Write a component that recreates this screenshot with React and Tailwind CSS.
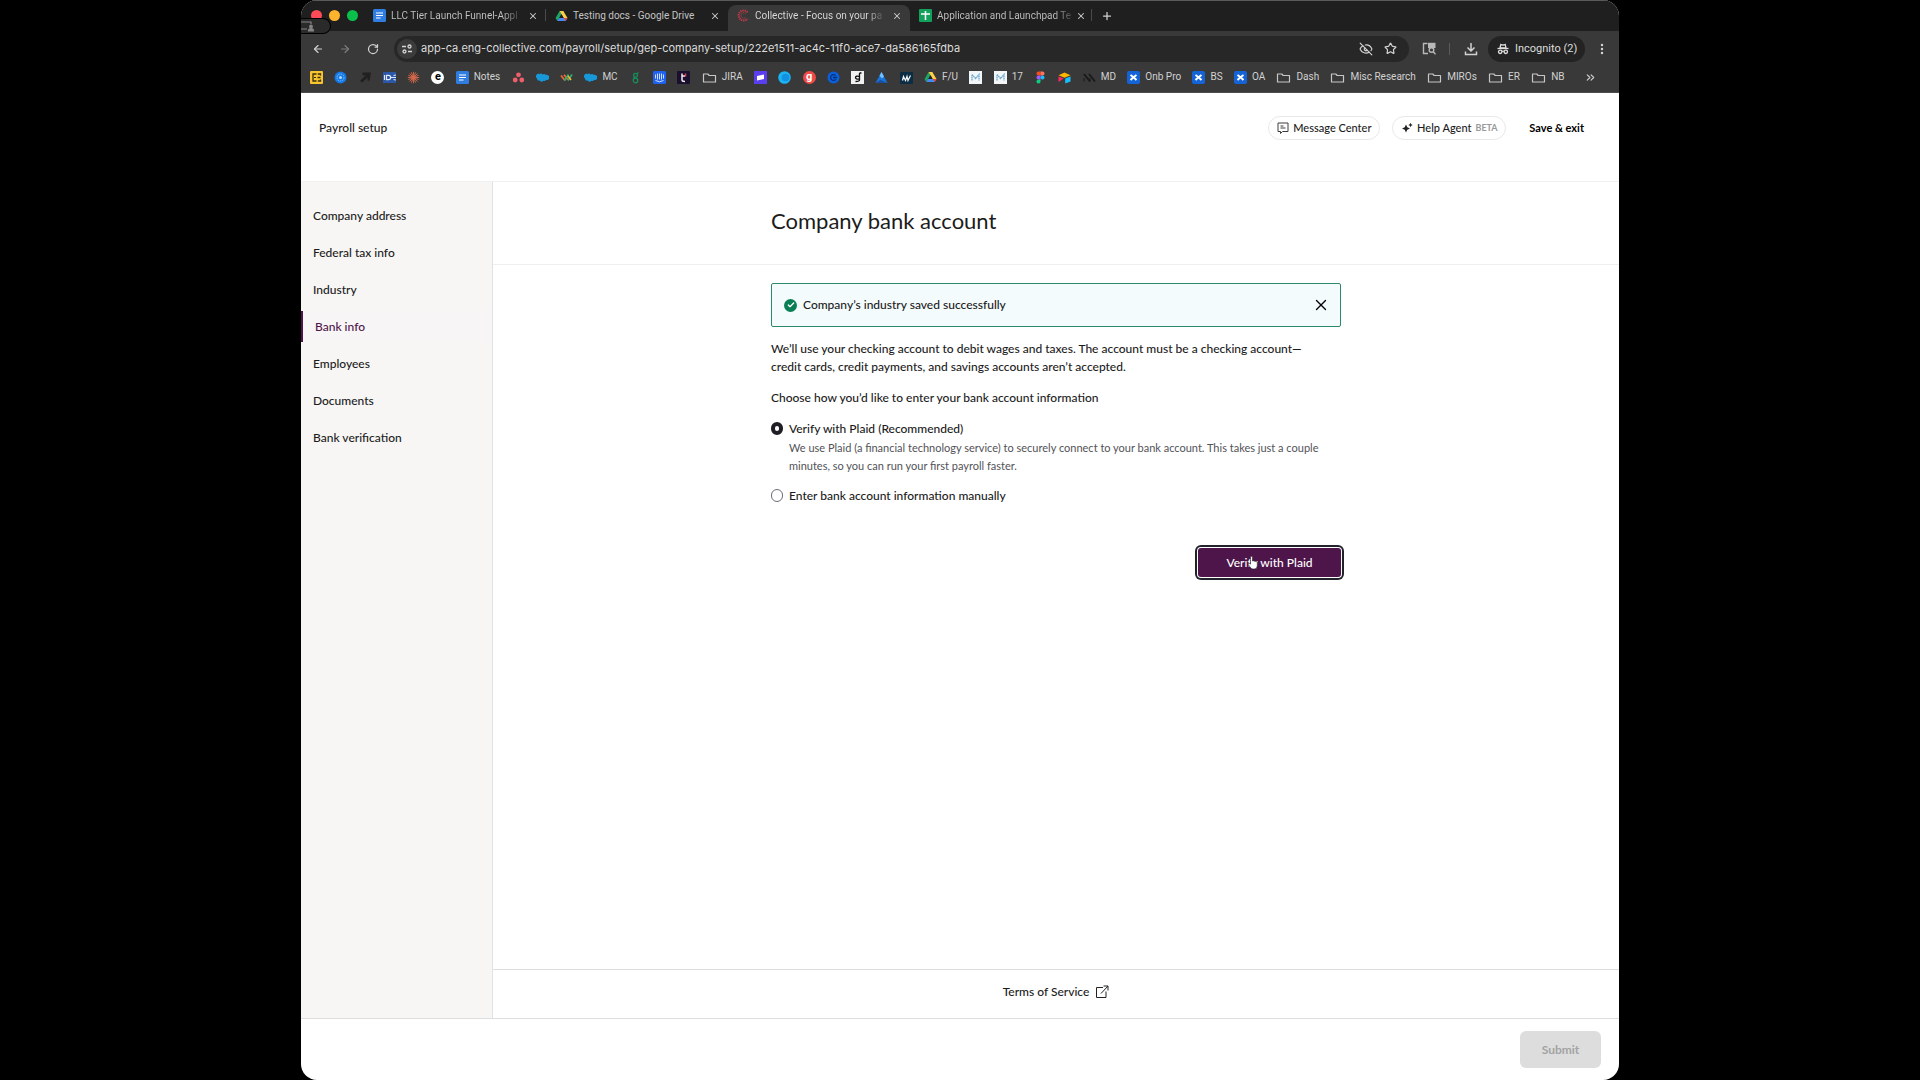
import { useState } from "react";
import { ArrowLeft, ArrowRight, RotateCw, EyeOff, Star, X, Plus, EllipsisVertical, ChevronsRight, Check } from "lucide-react";

const steps = [
  "Company address",
  "Federal tax info",
  "Industry",
  "Bank info",
  "Employees",
  "Documents",
  "Bank verification",
];

function DocsIcon() {
  return (
    <svg viewBox="0 0 13 13" className="w-[13px] h-[13px] shrink-0">
      <rect width="13" height="13" rx="1.500" fill="#2f7de1" />
      <path d="M3 4h7M3 6.500h7M3 9h4.500" stroke="#fff" strokeWidth="1.200" />
    </svg>
  );
}

function DriveIcon() {
  return (
    <svg viewBox="0 0 14 13" className="w-[13px] h-[12px] shrink-0">
      <path d="M5 1h4L4.700 8.500 2.500 12 .5 8.800z" fill="#1ea362" />
      <path d="M5 1h4l4.500 7.800H9.300z" fill="#ffcf48" />
      <path d="M4.500 8.700h9L11.500 12h-9z" fill="#4688f4" />
      <path d="M9.600 8.700h3.900L11.500 12z" fill="#ea4335" />
      <path d="M7 4.600l2.300 4.100H4.700z" fill="#1f1f1f" />
    </svg>
  );
}

function SheetsIcon() {
  return (
    <svg viewBox="0 0 13 13" className="w-[13px] h-[13px] shrink-0">
      <rect width="13" height="13" rx="1" fill="#12a15b" />
      <path d="M2 5h9M6.500 2v9" stroke="#fff" strokeWidth="1.500" />
    </svg>
  );
}

function CollectiveIcon() {
  return (
    <svg viewBox="0 0 13 13" className="w-[13px] h-[13px] shrink-0" fill="none" stroke="#c4394b">
      <path d="M10.500 3.200a5 5 0 1 0 0 6.600" strokeWidth="2.200" strokeDasharray="1.200 0.900" />
      <path d="M8.800 5a2.600 2.600 0 1 0 0 3" strokeWidth="1" strokeDasharray="1 0.800" />
    </svg>
  );
}

function FolderIcon() {
  return (
    <svg viewBox="0 0 15 13" className="w-[15px] h-[13px] shrink-0" fill="none" stroke="#c7c7c7" strokeWidth="1.200">
      <path d="M1.500 11V3h4.300l1.400 1.500h6.300V11z" strokeLinejoin="round" />
    </svg>
  );
}

function CloudIcon() {
  return (
    <svg viewBox="0 0 13 13" className="w-[13px] h-[13px] shrink-0" fill="#1798d8">
      <path d="M3.200 3a2.600 2.600 0 0 1 3.500.4 2.400 2.400 0 0 1 3.200.6 2.600 2.600 0 1 1 .2 5 2.200 2.200 0 0 1-2.600.8 2.300 2.300 0 0 1-3.800-.2A2.400 2.400 0 0 1 1 7.400 2.500 2.500 0 0 1 3.200 3z" />
    </svg>
  );
}

function JiraXIcon() {
  return (
    <svg viewBox="0 0 13 13" className="w-[13px] h-[13px] shrink-0">
      <rect width="13" height="13" rx="2" fill="#1464d8" />
      <path d="M3.500 4Q6.500 6 9.500 9M9.500 4Q6.500 6 3.500 9" stroke="#fff" strokeWidth="2" fill="none" />
    </svg>
  );
}

function MiroMIcon() {
  return (
    <svg viewBox="0 0 13 13" className="w-[13px] h-[13px] shrink-0">
      <rect width="13" height="13" fill="#f2f6f9" />
      <path d="M3 9.500v-6l3.500 4 3.500-4v6" stroke="#6aa6cc" strokeWidth="1.300" fill="none" strokeDasharray="1.500 0.500" />
    </svg>
  );
}

function LetterIcon({ className, children }) {
  return (
    <span className={`w-[13px] h-[13px] shrink-0 flex items-center justify-center text-[11px] leading-none ${className}`}>
      {children}
    </span>
  );
}

function Glyph({ children }) {
  return (
    <svg viewBox="0 0 13 13" className="w-[13px] h-[13px] shrink-0" fill="none">
      {children}
    </svg>
  );
}

const bookmarks = [
  {
    icon: (
      <Glyph>
        <rect width="13" height="13" rx="1" fill="#f7c52f" />
        <path d="M6.500 3H3v7h3.500M7.800 3h2.700v1.500M10.500 8.500V10H7.800M7.500 6.500h3" stroke="#3a2d0c" strokeWidth="1.300" />
        <path d="M4 6.500h2" stroke="#3a2d0c" />
      </Glyph>
    ),
  },
  {
    icon: (
      <Glyph>
        <circle cx="6.500" cy="6.500" r="6" fill="#1478e8" />
        <circle cx="6.500" cy="6.500" r="3.500" stroke="#7cc4ff" strokeDasharray="1.500 0.800" />
        <circle cx="6.500" cy="6.500" r="1.500" fill="#a8d8ff" />
      </Glyph>
    ),
  },
  {
    icon: (
      <Glyph>
        <path d="M3.500 1.500H12l-1.500 8.300-2.200-.4.600-3L3 11.500 1 9.800l5.800-5.500h-3.300z" fill="#202020" />
      </Glyph>
    ),
  },
  {
    icon: (
      <Glyph>
        <rect y="1" width="13" height="11" fill="#2b57a8" />
        <path d="M1.500 4v5M3.500 4.300h2a2.200 2.200 0 0 1 0 4.400h-2zM8 6.500h5M10.500 4.500l2.500-.5M10.500 8.500l2.500.5" stroke="#dfe8f7" strokeWidth="1.200" />
      </Glyph>
    ),
  },
  {
    icon: (
      <Glyph>
        <path
          d="M6.500 .8v11.400M.8 6.500h11.400M2.500 2.500l8 8M10.500 2.500l-8 8M4.300 1.300l4.400 10.400M8.700 1.300l-4.400 10.400M1.300 4.300l10.400 4.400M11.700 4.300l-10.400 4.400"
          stroke="#d9694b"
          strokeWidth="0.900"
        />
      </Glyph>
    ),
  },
  { icon: <LetterIcon className="rounded-full bg-white text-black font-bold pb-px">e</LetterIcon> },
  { icon: <DocsIcon />, label: "Notes" },
  {
    icon: (
      <Glyph>
        <circle cx="6.500" cy="3.800" r="2.400" fill="#ee5f6b" />
        <circle cx="3.200" cy="9" r="2.400" fill="#ee5f6b" />
        <circle cx="9.800" cy="9" r="2.400" fill="#ee5f6b" />
      </Glyph>
    ),
  },
  { icon: <CloudIcon /> },
  {
    icon: (
      <Glyph>
        <path d="M1 4.500l4 5M4 3.800l4 5" stroke="#ef6a3a" strokeWidth="1.700" />
        <path d="M8.500 3.500l-4 6M12 3.500l-4 6" stroke="#2fae72" strokeWidth="1.700" />
        <path d="M8 5l3 4" stroke="#f2b632" strokeWidth="1.500" />
      </Glyph>
    ),
  },
  { icon: <CloudIcon />, label: "MC" },
  {
    icon: (
      <Glyph>
        <circle cx="6.500" cy="4.300" r="1.900" stroke="#14935c" strokeWidth="1.200" />
        <circle cx="6.500" cy="9.500" r="2.300" stroke="#14935c" strokeWidth="1.200" />
        <path d="M8 3L9.500 1M5.500 6l-1.200 1.500" stroke="#14935c" />
      </Glyph>
    ),
  },
  {
    icon: (
      <Glyph>
        <rect width="13" height="13" rx="1.500" fill="#1f62f0" />
        <path d="M2.500 3.500v4M4.500 2.500v6M6.500 2.500v6M8.500 2.500v6M10.500 3.500v4M2.500 9.500q4 2.500 8 0" stroke="#e4edff" strokeWidth="0.900" />
      </Glyph>
    ),
  },
  {
    icon: (
      <Glyph>
        <rect width="13" height="13" rx="1" fill="#1a0f2e" />
        <path d="M5 2.500v6.500q0 1.500 3 1.500M5 5h3" stroke="#f5e9ef" strokeWidth="1.500" />
        <path d="M8.500 2.500v3" stroke="#e44a4a" strokeWidth="1.500" />
      </Glyph>
    ),
  },
  { icon: <FolderIcon />, label: "JIRA" },
  {
    icon: (
      <Glyph>
        <rect width="13" height="13" fill="#5a3ff0" />
        <path d="M3 5l7-1.500v4.500l-7 1.500z" fill="#fff" />
      </Glyph>
    ),
  },
  {
    icon: (
      <Glyph>
        <circle cx="6.500" cy="6.500" r="6.300" fill="#1ab4f4" />
        <circle cx="7.500" cy="6.500" r="3.800" fill="#1490e0" />
      </Glyph>
    ),
  },
  { icon: <LetterIcon className="rounded-full bg-[#ee4a47] text-white font-bold pb-[2px]">g</LetterIcon> },
  {
    icon: (
      <Glyph>
        <circle cx="6.500" cy="6.500" r="6" fill="#0b5fd8" />
        <path d="M8.800 4.700a2.900 2.900 0 1 0 0 3.600M6 6.500h4" stroke="#0a2f7a" strokeWidth="1.300" />
      </Glyph>
    ),
  },
  {
    icon: (
      <Glyph>
        <rect width="13" height="13" fill="#f1f1f1" />
        <path d="M8.500 2v7q0 1.500-4 1.500M8.500 5.500q-4-1-4 1t4 1.500M8.500 2h2" stroke="#111" strokeWidth="1.300" />
      </Glyph>
    ),
  },
  {
    icon: (
      <Glyph>
        <path d="M6.500 1l6 11H.5z" fill="#1a73d8" />
        <path d="M6.500 1l2.500 4.600-2 2-2.500-2.900z" fill="#6fc2ff" />
        <path d="M.5 12l5-3 7 3z" fill="#1b4f9c" />
      </Glyph>
    ),
  },
  {
    icon: (
      <Glyph>
        <rect y="1" width="13" height="12" rx="1" fill="#0c2c44" />
        <path d="M2.500 9.500l1-4 2 4 1.500-4 1 4 2.500-5" stroke="#eef4f8" strokeWidth="1.300" />
      </Glyph>
    ),
  },
  { icon: <DriveIcon />, label: "F/U" },
  { icon: <MiroMIcon /> },
  { icon: <MiroMIcon />, label: "17" },
  {
    icon: (
      <Glyph>
        <path d="M6.500.5h-2a2 2 0 0 0 0 4h2z" fill="#f24e1e" />
        <path d="M6.500.5h2a2 2 0 0 1 0 4h-2z" fill="#ff7262" />
        <path d="M6.500 4.500h-2a2 2 0 0 0 0 4h2z" fill="#a259ff" />
        <circle cx="8.500" cy="6.500" r="2" fill="#1abcfe" />
        <path d="M6.500 8.500h-2a2 2 0 1 0 2 2z" fill="#0acf83" />
      </Glyph>
    ),
  },
  {
    icon: (
      <Glyph>
        <path d="M.5 4.200L6.500 1.500l6 2.700-6 2.500z" fill="#fcb400" />
        <path d="M7.200 7.600l5.300-2v5l-5.300 2z" fill="#18bfff" />
        <path d="M.5 5.400l5.200 2.200-5.200 3.500z" fill="#f82b60" />
      </Glyph>
    ),
  },
  {
    icon: (
      <Glyph>
        <path d="M1 3l6 7.500M6 3l6 7.500" stroke="#191919" strokeWidth="1.800" />
        <path d="M1 7v3.500M7 7v3.500" stroke="#191919" />
      </Glyph>
    ),
    label: "MD",
  },
  { icon: <JiraXIcon />, label: "Onb Pro" },
  { icon: <JiraXIcon />, label: "BS" },
  { icon: <JiraXIcon />, label: "OA" },
  { icon: <FolderIcon />, label: "Dash" },
  { icon: <FolderIcon />, label: "Misc Research" },
  { icon: <FolderIcon />, label: "MIROs" },
  { icon: <FolderIcon />, label: "ER" },
  { icon: <FolderIcon />, label: "NB" },
];

function Tab({ icon, title, active, divider }) {
  let color = "text-[#c4c4c4]";
  if (active) color = "bg-clip-text text-transparent bg-linear-to-r from-88% from-[#dedede] to-[#5a5a5a]";
  else if (divider) color = "bg-clip-text text-transparent bg-linear-to-r from-88% from-[#c4c4c4] to-[#4a4a4a]";

  return (
    <div
      className={`relative w-[182px] h-[26px] pl-[9px] pr-[8px] pb-[5px] flex items-center gap-[5px] rounded-t-lg ${
        active ? "bg-[#393939]" : ""
      }`}
    >
      {icon}
      <button type="button" className={`whitespace-nowrap text-left text-[10px] leading-4 ${color}`}>
        {title}
      </button>
      <button type="button" aria-label="Close tab" className="w-[10px] ml-auto text-[#d0d0d0]">
        <X className="w-[10px] h-[10px]" strokeWidth={2.5} />
      </button>
      {divider && <span className="absolute right-0 top-1 w-px h-3 bg-[#4a4a4a]" />}
    </div>
  );
}

function Browser() {
  return (
    <div className="relative text-[#d2d2d2] font-[Roboto,sans-serif] font-normal">
      <div className="h-[31px] bg-[#1f1f1f] border-t border-[#5a5a5a] flex items-end">
        <div className="w-[63px] h-[30px] pl-[10px] pb-[2px] flex items-center gap-[7px]">
          <span className="w-[11px] h-[11px] rounded-full bg-[#fe4b57]" />
          <span className="w-[11px] h-[11px] rounded-full bg-[#fdb32b]" />
          <span className="w-[11px] h-[11px] rounded-full bg-[#0ac04a]" />
        </div>
        <Tab icon={<DocsIcon />} title="LLC Tier Launch Funnel-Appl" divider />
        <Tab icon={<DriveIcon />} title="Testing docs - Google Drive" />
        <Tab icon={<CollectiveIcon />} title="Collective - Focus on your pa" active />
        <Tab icon={<SheetsIcon />} title="Application and Launchpad Te" divider />
        <button type="button" aria-label="New tab" className="h-[26px] pb-[5px] px-[9px]">
          <Plus className="w-3 h-3" strokeWidth={2.5} />
        </button>
      </div>

      {/* screen share indicator */}
      <div className="absolute left-0 top-[18px] w-[30px] h-4 bg-[#2a2a2a] border border-l-0 border-black rounded-r-lg flex items-center">
        <svg viewBox="0 0 14 12" className="w-[14px] h-3" fill="none" stroke="#858585" strokeWidth="1.200">
          <path d="M0 2h10v2M0 9h6" />
          <circle cx="10" cy="6.500" r="1.300" fill="#858585" />
          <path d="M7.500 11q0-2.500 2.500-2.500t2.500 2.500z" fill="#858585" />
        </svg>
      </div>

      <div className="h-[35px] bg-[#393939] pl-[11px] pr-[10px] flex items-center">
        <button type="button" aria-label="Back">
          <ArrowLeft className="w-3 h-3" strokeWidth={2.3} />
        </button>
        <button type="button" aria-label="Forward" className="ml-[15px] text-[#7d7d7d]">
          <ArrowRight className="w-3 h-3" strokeWidth={2.3} />
        </button>
        <button type="button" aria-label="Reload" className="ml-4">
          <RotateCw className="w-3 h-3" strokeWidth={2.5} />
        </button>
        <div className="flex-1 ml-[15px] h-[26px] rounded-full bg-[#272727] pl-[3px] pr-3 flex items-center">
          <span className="w-5 h-5 rounded-full bg-[#3b3b3b] flex items-center justify-center">
            <svg viewBox="0 0 12 12" className="w-3 h-3" fill="none" stroke="#d6d6d6" strokeWidth="1.300">
              <path d="M1 3.500h4M7 8.500h4" />
              <circle cx="8.500" cy="3.500" r="1.500" />
              <circle cx="3.500" cy="8.500" r="1.500" />
            </svg>
          </span>
          <input
            aria-label="Address"
            readOnly
            value="app-ca.eng-collective.com/payroll/setup/gep-company-setup/222e1511-ac4c-11f0-ace7-da586165fdba"
            className="flex-1 ml-1 bg-transparent outline-none font-[Inter,sans-serif] text-[11px] text-[#dcdcdc]"
          />
          <EyeOff className="w-[14px] h-[14px] mr-[11px]" />
          <Star className="w-[13px] h-[13px]" strokeWidth={2.2} />
        </div>
        <svg viewBox="0 0 14 13" className="w-[14px] h-[13px] ml-[13px]" fill="none" stroke="#b9b9b9" strokeWidth="1.400">
          <path d="M6 11.500H1.500v-10h4" />
          <path d="M6 .8h7.500V6H6z" fill="#b9b9b9" stroke="none" />
          <circle cx="9.500" cy="8" r="2.300" />
          <path d="M11.200 9.800l2.300 2.500" />
        </svg>
        <span className="w-px h-3 ml-[13px] bg-[#5b5b5b]" />
        <svg viewBox="0 0 14 14" className="w-[14px] h-[14px] ml-[14px]" fill="none" stroke="#d2d2d2" strokeWidth="1.500">
          <path d="M7 1v8M3.500 5.500L7 9l3.500-3.500M1.500 9.500v3h11v-3" />
        </svg>
        <div className="h-[26px] w-[97px] ml-[10px] pl-[9px] rounded-full bg-[#232323] flex items-center gap-[6px] text-[11px] leading-[26px] text-[#dedede]">
          <svg viewBox="0 0 12 12" className="w-3 h-3" fill="none" stroke="#dedede" strokeWidth="1.300">
            <path d="M.5 5.500h11" />
            <path d="M3 5l.8-3.500q2.200 1 4.400 0L9 5z" />
            <circle cx="3.200" cy="8.800" r="1.700" />
            <circle cx="8.800" cy="8.800" r="1.700" />
            <path d="M5 8.500q1-.6 2 0" />
          </svg>
          Incognito (2)
        </div>
        <EllipsisVertical className="w-[14px] h-[14px] ml-[10px]" strokeWidth={2.2} />
      </div>

      <div className="h-[27px] pb-1 bg-[#393939] border-b border-[#4d4d4d] pl-[9px] pr-[22px] flex items-center justify-between">
        {bookmarks.map((b, i) => (
          <button key={i} type="button" aria-label={b.label || "Bookmark"} className="flex items-center gap-[5px] text-[10px] leading-4 whitespace-nowrap">
            {b.icon}
            {b.label}
          </button>
        ))}
        <ChevronsRight className="w-[13px] h-[13px] ml-2" />
      </div>
    </div>
  );
}

function Header() {
  return (
    <header className="h-[89px] pt-[23px] pl-[18px] pr-[35px] border-b border-[#f1f1f1] flex items-start">
      <p className="text-[12px] leading-6">Payroll setup</p>
      <div className="ml-auto flex items-center text-[11px] leading-6">
        <button type="button" className="h-6 w-[112px] mr-3 rounded-full border border-[#e9e9e9] flex items-center justify-center gap-1">
          <svg viewBox="0 0 12 12" className="w-3 h-3" fill="none" stroke="#3c3c3c">
            <path d="M1 1h10v8.500H5.500L3.500 11.500v-2H1z" strokeLinejoin="round" />
            <path d="M3.500 4h3M3.500 6h5" />
          </svg>
          Message Center
        </button>
        <button type="button" className="h-6 w-[114px] mr-[23px] rounded-full border border-[#e9e9e9] flex items-center justify-center gap-1">
          <svg viewBox="0 0 12 12" className="w-3 h-3" fill="#222">
            <path d="M5 2.500l1.300 2.700L9 6.500 6.300 7.800 5 10.500 3.700 7.800 1 6.500l2.700-1.300z" />
            <path d="M9.500 .8l.7 1.500 1.500.7-1.500.7-.7 1.500-.7-1.500L7.300 3l1.500-.7z" />
          </svg>
          Help Agent
          <span className="text-[9px] font-bold text-[#9a9a9a]">BETA</span>
        </button>
        <button type="button" className="font-bold text-black">Save &amp; exit</button>
      </div>
    </header>
  );
}

function Sidebar() {
  return (
    <nav className="w-[192px] shrink-0 pt-[18px] bg-[#f7f6f5] border-r border-[#e2e2e2]">
      <ul className="flex flex-col gap-[6px] text-[12px] leading-[31px]">
        {steps.map((step) => (
          <li key={step}>
            <a
              href="#"
              className={
                step === "Bank info"
                  ? "block border-l-2 border-[#4e154a] pl-3 text-[#4e154a] bg-[#f8f5f7]"
                  : "block pl-3"
              }
            >
              {step}
            </a>
          </li>
        ))}
      </ul>
    </nav>
  );
}

function RadioOption({ id, label, hint, checked, onChange }) {
  return (
    <div className="flex items-start gap-[6px]">
      <input
        type="radio"
        name="method"
        id={id}
        checked={checked}
        onChange={onChange}
        className="appearance-none w-[12px] h-[13px] mt-[2px] shrink-0 rounded-full border border-[#6c6c72] bg-white checked:border-4 checked:border-[#1e1e24]"
      />
      <div>
        <label htmlFor={id} className="block leading-[18px]">
          {label}
        </label>
        {hint && <p className="mt-px text-[11px] leading-[18px] font-normal text-[#525257]">{hint}</p>}
      </div>
    </div>
  );
}

function BankAccount() {
  const [method, setMethod] = useState("plaid");
  const [showAlert, setShowAlert] = useState(true);

  return (
    <main className="flex-1 flex flex-col text-[12px]">
      <div className="h-[83px] border-b border-[#efefef]">
        <h1 className="max-w-[570px] mx-auto pt-[23px] text-[22px] leading-8 font-normal">Company bank account</h1>
      </div>

      <div className="flex-1 w-full max-w-[570px] mx-auto pt-[18px]">
        {showAlert && (
          <div role="status" className="h-11 pl-3 pr-[10px] flex items-center gap-[6px] rounded-[2px] border border-[#2b8a69] bg-[#f4fbfc]">
            <span className="w-[13px] h-[13px] rounded-full bg-[#0a7f55] flex items-center justify-center">
              <Check className="w-2 h-2 text-white" strokeWidth={4} />
            </span>
            <p>Company’s industry saved successfully</p>
            <button type="button" aria-label="Dismiss" className="ml-auto text-black" onClick={() => setShowAlert(false)}>
              <X className="w-[18px] h-[18px]" strokeWidth={1.8} />
            </button>
          </div>
        )}

        <p className="mt-[13px] leading-[18px]">
          We’ll use your checking account to debit wages and taxes. The account must be a checking account—
          <br />
          credit cards, credit payments, and savings accounts aren’t accepted.
        </p>

        <fieldset className="mt-[13px]">
          <legend className="leading-[18px]">Choose how you’d like to enter your bank account information</legend>
          <div className="mt-[13px] flex flex-col gap-[12px]">
            <RadioOption
              id="plaid"
              label="Verify with Plaid (Recommended)"
              hint="We use Plaid (a financial technology service) to securely connect to your bank account. This takes just a couple minutes, so you can run your first payroll faster."
              checked={method === "plaid"}
              onChange={() => setMethod("plaid")}
            />
            <RadioOption
              id="manual"
              label="Enter bank account information manually"
              checked={method === "manual"}
              onChange={() => setMethod("manual")}
            />
          </div>
        </fieldset>

        <div className="mt-[43px] flex justify-end">
          <button
            type="button"
            className="relative w-[143px] h-[29px] rounded-[3px] bg-[#4e154a] text-white font-medium ring-2 ring-[#23232b] ring-offset-1 ring-offset-white"
          >
            Verify with Plaid
            <svg viewBox="0 0 12 14" className="absolute left-[49px] top-[7px] w-3 h-[15px]" fill="#fff" stroke="#222" strokeWidth="0.600">
              <path d="M3.500 7.500V1.800a1 1 0 0 1 2 0V5.500q1-.6 1.700.2 1-.4 1.500.4 1.500-.3 1.600 1V10q0 3.500-3 3.500H6Q4.500 13.500 3.500 12L1 8.800q.8-1.600 2.500-.2z" />
            </svg>
          </button>
        </div>
      </div>

      <footer className="h-[49px] border-t border-[#dedede] flex items-start justify-center pt-[13px]">
        <a href="#" className="flex items-center gap-[6px] leading-[18px]">
          Terms of Service
          <svg viewBox="0 0 14 14" className="w-[14px] h-[14px]" fill="none" stroke="#222">
            <path d="M8 2.500H1.500v10h9.500V6.500M8.500 1h4.500v4.500M13 1L6 8.500" />
          </svg>
        </a>
      </footer>
    </main>
  );
}

function App() {
  return (
    <div className="min-h-screen bg-black">
      <div className="min-h-screen w-full max-w-[1318px] mx-auto flex flex-col rounded-2xl overflow-hidden bg-white text-[#1c1c1c] font-[Lato,sans-serif] font-medium">
        <Browser />
        <Header />
        <div className="flex-1 flex">
          <Sidebar />
          <BankAccount />
        </div>
        <div className="h-[62px] border-t border-[#dedede] pt-3 pr-[18px] flex items-start justify-end">
          <button type="button" disabled className="w-[81px] h-[37px] rounded-md bg-[#dddddd] text-[#a3a3a3] text-[12px] font-bold">
            Submit
          </button>
        </div>
      </div>
    </div>
  );
}

export default App;
